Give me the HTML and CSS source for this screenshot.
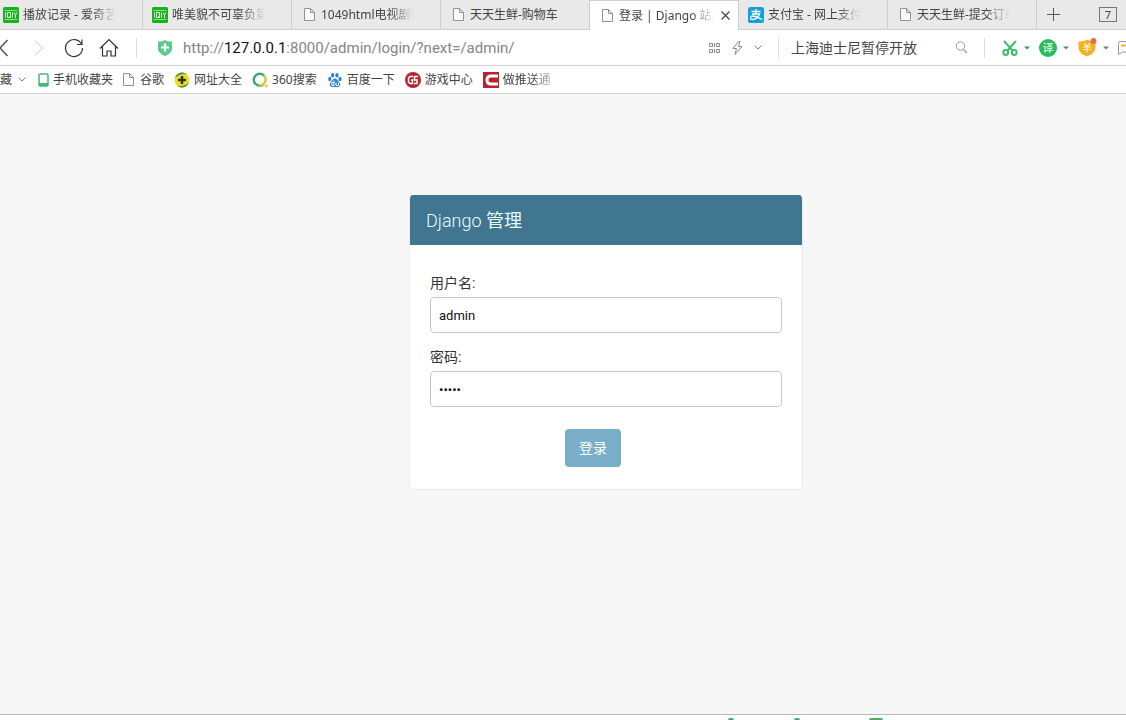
FILE: index.html
```html
<!DOCTYPE html>
<html lang="zh-CN">
<head>
<meta charset="utf-8">
<title>登录 | Django 站点管理员</title>
<link rel="stylesheet" href="styles.css">
</head>
<body>
<svg class="defs" aria-hidden="true">
  <symbol id="page" viewBox="0 0 11 13"><path d="M.5.5h6l4 4v8H.5zM6.5.5v4h4" fill="#fbfbfb" stroke="#929292"/></symbol>
  <symbol id="iqiyi" viewBox="0 0 16 16"><rect width="16" height="16" rx="1.500" fill="#19b319"/><path d="M1.500 3.500h13M1.500 12.500h13" stroke="#8be08b" fill="none"/><path d="M2.500 5.500v5M4.500 5.500h3v5h-3zM6.500 9l1.500 2M9.500 5.500v5M11 5.500l1.500 2.500 1.500-2.500M12.500 8v3" stroke="#e3ffe3" fill="none"/></symbol>
  <symbol id="caret" viewBox="0 0 6 4"><path d="M0 .5h6L3 3.500z" fill="#4d8f6c"/></symbol>
  <symbol id="chevron" viewBox="0 0 8 5"><path d="M.5.5L4 4 7.500.5" fill="none" stroke="#777"/></symbol>
</svg>

<nav class="tabs" aria-label="标签页">
  <a class="tab tab-first" href="#"><svg class="icon16"><use href="#iqiyi"/></svg><span class="tab-text">播放记录 - 爱奇艺</span></a>
  <a class="tab tab-brand" href="#"><svg class="icon16"><use href="#iqiyi"/></svg><span class="tab-text">唯美貌不可辜负第</span></a>
  <a class="tab" href="#"><svg class="icon-page"><use href="#page"/></svg><span class="tab-text">1049html电视剧排行</span></a>
  <a class="tab" href="#"><svg class="icon-page"><use href="#page"/></svg><span class="tab-text tab-text-full">天天生鲜-购物车</span></a>
  <div class="tab tab-active"><svg class="icon-page"><use href="#page"/></svg><span class="tab-text">登录 | Django 站点</span><button class="tab-close" type="button" aria-label="关闭"><svg viewBox="0 0 9 9"><path d="M.5.5l8 8M8.500.5l-8 8" stroke="#444" stroke-width="1.200"/></svg></button></div>
  <a class="tab tab-brand" href="#"><svg class="icon16" viewBox="0 0 16 16"><rect width="16" height="16" rx="2" fill="#14a0d8"/><path d="M3.500 4.500h9M8 2v5M4 7h7.500C10.500 10 7.500 12.500 4.500 12.500 1.500 12.500 2 9 5 9c3 0 5.500 2 9.500 3.500" fill="none" stroke="#fff" stroke-width="1.300"/></svg><span class="tab-text">支付宝 - 网上支付</span></a>
  <a class="tab" href="#"><svg class="icon-page"><use href="#page"/></svg><span class="tab-text">天天生鲜-提交订单</span></a>
  <button class="tab-new" type="button" aria-label="新标签页"><svg viewBox="0 0 13 13"><path d="M6.500 0v13M0 6.500h13" stroke="#555"/></svg></button>
  <button class="tab-count" type="button">7</button>
</nav>

<div class="toolbar">
  <button class="nav-back" type="button" aria-label="后退"><svg width="8" height="18" viewBox="0 0 8 18"><path d="M7.500 1L0 9l7.500 8" fill="none" stroke="#444" stroke-width="1.200"/></svg></button>
  <button class="nav-forward" type="button" aria-label="前进"><svg width="10" height="16" viewBox="0 0 10 16"><path d="M1 1l8 7-8 7" fill="none" stroke="#ddd" stroke-width="1.200"/></svg></button>
  <button class="nav-reload" type="button" aria-label="刷新"><svg width="20" height="20" viewBox="0 0 20 20"><path d="M17.500 6A8.500 8.500 0 1 0 18.500 10M18 1.500V6.500h-5" fill="none" stroke="#333" stroke-width="1.200"/></svg></button>
  <button class="nav-home" type="button" aria-label="主页"><svg width="20" height="20" viewBox="0 0 20 20"><path d="M1 10.500L10 1.500l9 9M3.500 8.500v9.500h4.500v-5h4v5h4.500V8.500" fill="none" stroke="#333" stroke-width="1.200"/></svg></button>
  <div class="address">
    <svg width="14" height="16" viewBox="0 0 14 16"><path d="M7 0c2 1.500 4.500 1.500 7 1.500V9c0 3-3.500 5.500-7 7-3.500-1.500-7-4-7-7V1.500C2.500 1.500 5 1.500 7 0z" fill="#5ccb8c"/><path d="M7 3.500v8M3 7.500h8" stroke="#fff" stroke-width="2.200"/></svg>
    <span class="url">http://<b>127.0.0.1</b>:8000/admin/login/?next=/admin/</span>
    <button type="button" aria-label="二维码"><svg width="12" height="12" viewBox="0 0 12 12"><path d="M.5 1.500h3v3h-3zM5.500 1v4M7.500 1.500h3v3h-3zM.5 7.500h3v3h-3zM5.500 7v4M7.500 7.500h3v3h-3z" fill="none" stroke="#888"/></svg></button>
    <button type="button" aria-label="加速"><svg width="11" height="14" viewBox="0 0 11 14"><path d="M6.500.5L1 7.500h3.500l-1.500 6 7-8H6.500l1.500-5z" fill="none" stroke="#888"/></svg></button>
    <button type="button" aria-label="更多"><svg width="8" height="5"><use href="#chevron"/></svg></button>
  </div>
  <div class="search">
    <input type="text" aria-label="搜索" value="上海迪士尼暂停开放">
    <button type="button" aria-label="搜索"><svg width="13" height="13" viewBox="0 0 13 13"><circle cx="5.500" cy="5" r="4.200" fill="none" stroke="#999"/><path d="M8.500 8.500L12 12" stroke="#999" stroke-width="1.200"/></svg></button>
  </div>
  <div class="tools">
    <button type="button" aria-label="截图"><svg width="16" height="16" viewBox="0 0 16 16" fill="none" stroke="#3bbf6b" stroke-width="2"><path d="M2 1l8.500 9.500M14 1L5.500 10.500"/><circle cx="3.700" cy="12.500" r="2.400"/><circle cx="12.300" cy="12.500" r="2.400"/></svg><svg class="caret"><use href="#caret"/></svg></button>
    <button type="button" aria-label="翻译"><span class="translate">译</span><svg class="caret"><use href="#caret"/></svg></button>
    <button type="button" aria-label="购物"><svg width="19" height="19" viewBox="0 0 19 19"><path d="M9 1.500c2.500 1.500 5 2 8.500 2V9c0 5-4 8-8.500 9.500C4.500 17 .5 14 .5 9V3.500c3.500 0 6-.5 8.500-2z" fill="#f4b223"/><path d="M6 5l3 3.500L12 5M5 9h8M5 11.500h8M9 8.500v6" fill="none" stroke="#fff3cc" stroke-width="1.200"/><circle cx="15.500" cy="3" r="3" fill="#ec6a54"/></svg><svg class="caret"><use href="#caret"/></svg></button>
    <button type="button" aria-label="消息"><svg width="8" height="16" viewBox="0 0 8 16"><path d="M9 1.500H2.500Q.5 1.500.5 3.500v11l4-2.500H9" fill="none" stroke="#999"/><path d="M3 5.500h6" stroke="#efb52d" stroke-width="2"/></svg></button>
  </div>
</div>

<nav class="bookmarks" aria-label="收藏">
  <button class="fav" type="button">藏<svg width="8" height="5"><use href="#chevron"/></svg></button>
  <a href="#"><svg width="11" height="14" viewBox="0 0 11 14"><rect x="1" y="1" width="9" height="12" rx="1" fill="#fff" stroke="#45b978" stroke-width="1.500"/><path d="M1 11.500h9" stroke="#45b978" stroke-width="3"/></svg>手机收藏夹</a>
  <a class="mark-google" href="#"><svg class="icon-page"><use href="#page"/></svg>谷歌</a>
  <a href="#"><svg class="icon16" viewBox="0 0 16 16"><circle cx="8" cy="8" r="7.500" fill="#f4d92b"/><path d="M1 5.500A7.500 7.500 0 0 1 13 2.500C9 1 5 3 1 5.500zM15 10.500A7.500 7.500 0 0 1 3 13.500C8 15 12 13 15 10.500z" fill="#389b40"/><path d="M8 4v8M4 8h8" stroke="#263c14" stroke-width="2.500"/></svg>网址大全</a>
  <a href="#"><svg class="icon16" viewBox="0 0 16 16" fill="none" stroke-width="2.500"><path d="M12 12A6 6 0 1 1 12 3.500" stroke="#36aa79"/><path d="M12 3.500A6 6 0 0 1 7.500 13.500" stroke="#e2c639"/><circle cx="14.500" cy="14" r="1.200" fill="#efb52d" stroke="none"/></svg>360搜索</a>
  <a href="#"><svg class="icon16" viewBox="0 0 16 16" fill="#327fca"><ellipse cx="2.800" cy="7" rx="1.600" ry="2.200"/><ellipse cx="5.700" cy="3.200" rx="1.600" ry="2.300"/><ellipse cx="10" cy="3.200" rx="1.600" ry="2.300"/><ellipse cx="13" cy="7" rx="1.600" ry="2.200"/><path d="M8 6.500c2 0 2.500 2 4 3.500 2.500 2.500 1 5-1.500 5-1 0-4 0-5 0C3 15 1.500 12.500 4 10 5.500 8.500 6 6.500 8 6.500z"/><path d="M7 10.500H4.800v3H7v-5M9 10.500v3h2.500v-3" fill="none" stroke="#fff"/></svg>百度一下</a>
  <a href="#"><svg class="icon16" viewBox="0 0 16 16"><circle cx="8" cy="8" r="8" fill="#ba2230"/><path d="M8 4.500H5L3.500 6v4L5 11.500h2.500V8H6M13 4.500H9.500V8H12v3.500H9" fill="none" stroke="#fff" stroke-width="1.500"/></svg>游戏中心</a>
  <a class="mark-last" href="#"><svg class="icon16" viewBox="0 0 16 16"><rect width="16" height="16" fill="#b8232f"/><path d="M15 4H8Q4 4 4 8t4 4h7" fill="none" stroke="#fff" stroke-width="3"/></svg><span>做推送通</span></a>
</nav>

<main class="content">
  <section class="login">
    <h1>Django <span>管理</span></h1>
    <form>
      <div class="row"><label for="username">用户名:</label><input id="username" type="text" value="admin"></div>
      <div class="row"><label for="password">密码:</label><input id="password" type="password" value="admin"></div>
      <div class="submit"><button type="submit">登录</button></div>
    </form>
  </section>
</main>

<footer class="status"><i></i><i></i><i class="wide"></i></footer>
</body>
</html>
```
FILE: styles.css
```css
* { box-sizing: border-box; }

body {
  margin: 0;
  min-height: 100vh;
  display: flex;
  flex-direction: column;
  overflow-x: hidden;
  background: #fff;
  color: #444;
  font: 12px/18px "Noto Sans", "Noto Sans CJK SC", sans-serif;
}

a { color: inherit; text-decoration: none; }
svg { display: block; flex: none; }
button { font: inherit; color: inherit; background: none; border: 0; padding: 0; display: flex; align-items: center; }
.defs { position: absolute; width: 0; height: 0; }
.icon16 { width: 16px; height: 16px; }
.icon-page { width: 11px; height: 13px; }

.tabs {
  display: flex;
  height: 30px;
  background: #e9e9e9;
  border-bottom: 1px solid #cfcfcf;
}
.tab {
  flex: 0 1 149px;
  min-width: 0;
  display: flex;
  align-items: center;
  gap: 6px;
  padding: 0 26px 0 12px;
  border-right: 1px solid #cfcfcf;
  white-space: nowrap;
}
.tab-brand { gap: 4px; padding-left: 9px; }
.tab-first { flex-basis: 143px; gap: 4px; padding-left: 3px; }
.tab-text {
  flex: 1;
  min-width: 0;
  overflow: hidden;
  -webkit-mask-image: linear-gradient(to right, #000 calc(100% - 24px), transparent);
  mask-image: linear-gradient(to right, #000 calc(100% - 24px), transparent);
}
.tab-text-full { -webkit-mask-image: none; mask-image: none; }
.tab-active {
  height: 30px;
  padding-right: 8px;
  background: #fff;
  border-top: 1px solid #cfcfcf;
}
.tab-close svg { width: 9px; height: 9px; }
.tab-new { padding: 0 10px; }
.tab-new svg { width: 13px; height: 13px; }
.tab-count {
  flex: none;
  align-self: center;
  justify-content: center;
  width: 18px;
  height: 15px;
  margin: 0 9px 0 auto;
  border: 1px solid #777;
  font-size: 11px;
  line-height: 12px;
}

.toolbar {
  display: flex;
  align-items: center;
  height: 36px;
  border-bottom: 1px solid #d2d2d2;
}
.nav-back { width: 34px; }
.nav-forward { width: 30px; }
.nav-reload { width: 35px; }
.nav-home { width: 37px; }
.address {
  flex: 1;
  display: flex;
  align-items: center;
  gap: 11px;
  padding: 0 16px 0 21px;
  border-left: 1px solid #ddd;
  height: 20px;
  min-width: 0;
}
.url {
  flex: 1;
  color: #858585;
  font-family: Roboto, sans-serif;
  font-size: 15px;
  line-height: 20px;
  white-space: nowrap;
}
.url b { color: #111; font-weight: 400; }
.search {
  display: flex;
  align-items: center;
  width: 207px;
  height: 20px;
  padding: 0 16px 0 12px;
  border-left: 1px solid #ddd;
  border-right: 1px solid #ddd;
}
.search input {
  flex: 1;
  min-width: 0;
  padding: 0;
  border: 0;
  outline: 0;
  background: none;
  color: #444;
  font: 14px/20px "Noto Sans", "Noto Sans CJK SC", sans-serif;
}
.tools { display: flex; align-items: center; gap: 9px; padding-left: 17px; }
.tools button { gap: 6px; }
.caret { width: 6px; height: 4px; }
.translate {
  width: 18px;
  height: 18px;
  border-radius: 50%;
  background: #27bd5a;
  color: #fff;
  font-size: 11px;
  line-height: 18px;
  text-align: center;
}

.bookmarks {
  display: flex;
  align-items: center;
  gap: 10px;
  height: 28px;
  border-bottom: 1px solid #d2d2d2;
  white-space: nowrap;
}
.bookmarks a { display: flex; align-items: center; gap: 4px; }
.fav { gap: 6px; margin-right: 2px; }
.bookmarks .mark-google { gap: 6px; }
.mark-last span {
  -webkit-mask-image: linear-gradient(to right, #000 60%, rgba(0, 0, 0, .3));
  mask-image: linear-gradient(to right, #000 60%, rgba(0, 0, 0, .3));
}

.content {
  flex: 1;
  padding: 101px 0 40px 86px;
  background: #f7f7f7;
}
.login {
  width: 394px;
  max-width: 100%;
  margin: 0 auto;
  background: #fff;
  border: 1px solid #eaeaea;
  border-top: 0;
  border-radius: 4px;
  overflow: hidden;
  color: #333;
  font-family: Roboto, "Noto Sans CJK SC", sans-serif;
}
.login h1 {
  margin: 0;
  padding: 16px 16px 14px;
  background: #417690;
  color: #e9fbff;
  font-size: 18px;
  font-weight: 300;
  line-height: 20px;
}
.login h1 span { font-weight: 400; }
.login form { padding: 28px 20px 22px; }
.row { margin-bottom: 14px; }
.row label { display: block; margin-bottom: 4px; font-size: 14px; line-height: 20px; }
.row input {
  display: block;
  width: 100%;
  height: 36px;
  padding: 8px;
  border: 1px solid #c8c8c8;
  border-radius: 4px;
  background: #fff;
  color: #111;
  font: 13px/18px Roboto, "Noto Sans CJK SC", sans-serif;
}
.submit { display: flex; justify-content: center; padding: 8px 26px 0 0; }
.submit button {
  padding: 10px 14px;
  border-radius: 4px;
  background: #79aec8;
  color: #fff;
  font-size: 14px;
  line-height: 18px;
}

.status {
  display: flex;
  gap: 60px;
  height: 6px;
  padding-left: 728px;
  border-top: 1px solid #b9b9b9;
  overflow: hidden;
}
.status i { width: 6px; height: 3px; margin-top: 3px; border-radius: 2px 2px 0 0; background: #4caf62; }
.status .wide { width: 14px; margin-left: 9px; }
```
